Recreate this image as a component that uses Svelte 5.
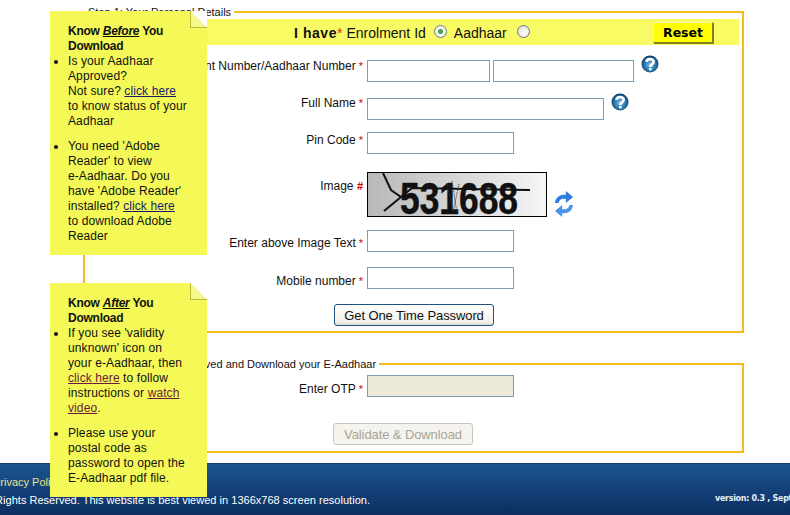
<script>
  const rows = [
    { label: 'Resident Number/Aadhaar Number', mark: '*', fields: ['w123', 'w141'], help: true, cls: 'r1' },
    { label: 'Full Name', mark: '*', fields: ['w237'], help: true, cls: 'r2' },
    { label: 'Pin Code', mark: '*', fields: ['w147'], cls: 'r3' }
  ];
</script>

<div class="page">
  <main class="content">
    <fieldset class="box first">
      <legend>Step 1: Your Personal Details</legend>
      <div class="have">
        <span class="have-label"><b>I have</b><i>*</i></span>
        <span>Enrolment Id</span>
        <input class="radio" type="radio" name="kind" checked />
        <span class="aadhaar">Aadhaar</span>
        <input class="radio" type="radio" name="kind" />
        <button class="reset">Reset</button>
      </div>

      {#each rows as row}
        <div class="row {row.cls}">
          <label class="lab">{row.label}<i>{row.mark}</i></label>
          <div class="vals">
            {#each row.fields as f}<input class="text {f}" />{/each}
            {#if row.help}
              <svg class="help" viewBox="0 0 18 18" width="18" height="18">
                <defs>
                  <radialGradient id="hg{row.cls}" cx=".5" cy=".55" r=".55">
                    <stop offset="0" stop-color="#7fc0e4" />
                    <stop offset=".6" stop-color="#2a78ad" />
                    <stop offset="1" stop-color="#0b3a66" />
                  </radialGradient>
                </defs>
                <circle cx="9" cy="9" r="8.500" fill="url(#hg{row.cls})" />
                <path d="M5.500 6.800C5.800 3.400 12.700 3.200 12.700 6.800 12.700 9.200 9.300 9.300 9.300 12" fill="none" stroke="#fff" stroke-width="2.700" />
                <rect x="8" y="13" width="2.600" height="2.400" fill="#fff" />
              </svg>
            {/if}
          </div>
        </div>
      {/each}

      <div class="row r4">
        <label class="lab lab-top">Image <i class="hash">#</i></label>
        <div class="vals img-vals">
          <svg class="captcha" viewBox="0 0 180 45" width="180" height="45">
            <defs>
              <linearGradient id="cg" x1="0" x2="1" y1="0" y2="0">
                <stop offset="0" stop-color="#b8b8b8" />
                <stop offset="1" stop-color="#f6f6f6" />
              </linearGradient>
            </defs>
            <rect x=".5" y=".5" width="179" height="44" fill="url(#cg)" stroke="#000" />
            <text x="33" y="42" class="ctext" textLength="118" lengthAdjust="spacingAndGlyphs">531688</text>
            <path d="M16 1l8 17 10 7M17 39l28-23 118 2" fill="none" stroke="#111" stroke-width="2" />
            <path d="M80 11l6 29M85 9l5 32M92 12l-6 28" fill="none" stroke="#333" stroke-width="1" stroke-dasharray="1 1" />
          </svg>
          <svg class="refresh" viewBox="0 0 22 26" width="20" height="26" preserveAspectRatio="none">
            <path d="M1 12C2 6 7 3 13 4V0l8 6-8 6V8C9 7 6 8 5 12z" fill="#2f7de0" />
            <path d="M21 14c-1 6-6 9-12 8v4l-8-6 8-6v4c4 1 7 0 8-4z" fill="#4a94ea" />
          </svg>
        </div>
      </div>

      <div class="row r5">
        <label class="lab">Enter above Image Text<i>*</i></label>
        <div class="vals"><input class="text w147" /></div>
      </div>
      <div class="row r6">
        <label class="lab">Mobile number<i>*</i></label>
        <div class="vals"><input class="text w147" /></div>
      </div>
      <div class="row r7">
        <div class="lab"></div>
        <button class="otp">Get One Time Password</button>
      </div>
    </fieldset>

    <fieldset class="box second">
      <legend class="legend2">Step 2: Enter OTP Received and Download your E-Aadhaar</legend>
      <div class="row r8">
        <label class="lab">Enter OTP<i>*</i></label>
        <div class="vals"><input class="text w147 off" disabled /></div>
      </div>
      <div class="row r9">
        <div class="lab"></div>
        <button class="validate" disabled>Validate &amp; Download</button>
      </div>
    </fieldset>
  </main>

  <footer class="foot">
    <div class="foot-left">
      <div class="links"><a href="#p">Privacy Policy</a></div>
      <div class="copy">Copyright © 2013 UIDAI. All Rights Reserved. This website is best viewed in 1366x768 screen resolution.</div>
    </div>
    <div class="version">version: 0.3 , September 2013</div>
  </footer>

  <aside class="note n1">
    <div class="fold"></div>
    <h4>Know <u><em>Before</em></u> You Download</h4>
    <ul>
      <li>Is your Aadhaar Approved?<br />Not sure? <a href="#a">click here</a><br />to know status of your Aadhaar</li>
      <li>You need 'Adobe Reader' to view <span class="nb">e-Aadhaar.</span> Do you have 'Adobe Reader' installed? <a href="#b">click here</a><br />to download Adobe Reader</li>
    </ul>
  </aside>

  <aside class="note n2">
    <div class="fold"></div>
    <h4>Know <u><em>After</em></u> You Download</h4>
    <ul>
      <li>If you see 'validity unknown' icon on<br />your e-Aadhaar, then<br /><a class="vis" href="#c">click here</a> to follow instructions or <a class="vis" href="#d">watch video</a>.</li>
      <li>Please use your postal code as password to open the <span class="nb">E-Aadhaar</span> pdf file.</li>
    </ul>
  </aside>
</div>

<style>
  :global(body) { margin: 0; background: #fff; }
  .page {
    position: relative;
    width: 790px;
    height: 515px;
    overflow: hidden;
    font-family: "Liberation Sans", Arial, sans-serif;
    font-size: 12px;
    color: #111;
    display: flex;
    flex-direction: column;
  }
  .content { flex: 1; padding: 5px 46px 0 83px; }
  .box {
    margin: 0;
    padding: 0 2px 0 2px;
    border: 2px solid #f2bb1e;
    min-width: 0;
  }
  .first { height: 328px; box-sizing: border-box; padding-bottom: 0; }
  .second { height: 96px; box-sizing: border-box; margin-top: 24px; }
  legend { padding: 0 3px 0 3px; margin-left: -2px; font-size: 11px; line-height: 14px; height: 14px; }
  .legend2 { margin-left: -6px; }
  .have {
    height: 26px;
    margin-right: 1px;
    background: #f9fb64;
    display: flex;
    align-items: center;
    padding-left: 207px;
    font-size: 14px;
    position: relative;
  }
  .have > span { position: relative; top: 1px; }
  .have-label { margin-right: 4px; }
  .aadhaar { margin-right: 2px; }
  .have b { letter-spacing: .55px; }
  .have-label i { color: #d22; font-style: normal; }
  .radio {
    appearance: none;
    width: 13px;
    height: 13px;
    margin: 0 7px 2px 8px;
    border-radius: 50%;
    border: 1px solid #6b7a84;
    background: radial-gradient(circle at 60% 60%, #fff, #d8d8d0);
    box-sizing: border-box;
  }
  .radio:checked { background: radial-gradient(circle, #3fa34d 0 2px, #f4f4ee 3px); }
  .reset {
    position: absolute;
    left: 566px;
    top: 3px;
    width: 60px;
    height: 21px;
    padding: 0;
    font: bold 12.500px "DejaVu Sans", sans-serif;
    color: #000;
    background: #ffff00;
    border: 1px solid;
    border-color: #f4f4b0 #80801c #80801c #f4f4b0;
    box-shadow: 1px 1px 0 #80801c;
  }
  .row { display: flex; align-items: flex-start; }
  .lab {
    width: 276px;
    flex: none;
    box-sizing: border-box;
    text-align: right;
    white-space: nowrap;
    line-height: 14px;
    padding-top: 2px;
  }
  .lab i { color: #c00; font-style: normal; margin-left: 3px; font-size: 11px; }
  .lab .hash { margin-left: 0; font-weight: bold; }
  .vals { display: flex; align-items: flex-start; gap: 3px; margin-left: 4px; }
  .text {
    box-sizing: border-box;
    height: 22px;
    padding: 0;
    border: 1px solid #7f9db0;
    background: #fff;
  }
  .off { background: #ece9d8; }
  .w123 { width: 123px; }
  .w141 { width: 141px; }
  .w237 { width: 237px; }
  .w147 { width: 147px; }
  .help { margin: -5px 0 0 4px; }
  .r1 { margin-top: 15px; }
  .r1 .lab { padding-top: 0; margin-top: -1px; }
  .r2 { margin-top: 16px; }
  .r2 .lab { padding-top: 0; margin-top: -2px; }
  .r3 { margin-top: 12px; }
  .r3 .lab { padding-top: 1px; }
  .r4 { margin-top: 18px; }
  .img-vals { gap: 7px; align-items: flex-end; }
  .captcha { display: block; }
  .ctext { font: bold 44px "Liberation Sans", sans-serif; fill: #111; stroke: #111; stroke-width: .5; }
  .lab-top { padding-top: 7px; }
  .r5 { margin-top: 13px; }
  .r5 .lab { padding-top: 6px; }
  .r6 { margin-top: 15px; }
  .r6 .lab { padding-top: 7px; }
  .r7 { margin-top: 15px; }
  .r8 { margin-top: 4px; }
  .r9 { margin-top: 26px; }
  .r8 .lab { padding-top: 7px; }
  .otp, .validate {
    box-sizing: border-box;
    height: 22px;
    padding: 0;
    font: 13px "Liberation Sans", sans-serif;
    letter-spacing: -.1px;
    border-radius: 3px;
  }
  .otp {
    margin-left: -29px;
    width: 160px;
    color: #111;
    background: linear-gradient(#fff, #f2f1ea 85%, #dcdacd);
    border: 1px solid #1c5180;
  }
  .validate {
    margin-left: -30px;
    width: 140px;
    color: #a8a697;
    background: #f4f3ee;
    border: 1px solid #c9c7ba;
  }
  .foot {
    height: 52px;
    flex: none;
    box-sizing: border-box;
    position: relative;
    border-top: 1px solid #123e6c;
    background: linear-gradient(#1b5590, #0c2e60);
    overflow: hidden;
    display: flex;
    color: #fff;
  }
  .foot-left {
    width: 370px;
    flex: none;
    display: flex;
    flex-direction: column;
    align-items: flex-end;
    overflow: hidden;
    padding-top: 11px;
    box-sizing: border-box;
  }
  .links { align-self: flex-start; margin-left: -7px; line-height: 14px; font-size: 11px; }
  .links a { color: #eee28c; text-decoration: none; }
  .copy { white-space: nowrap; line-height: 14px; margin-top: 4px; font-size: 11px; letter-spacing: .02px; }
  .version {
    margin: 30px 0 0 345px;
    white-space: nowrap;
    font: bold 8px "DejaVu Sans", sans-serif;
    letter-spacing: -.3px;
    line-height: 10px;
    color: #e8eef5;
  }
  .note {
    position: absolute;
    left: 50px;
    width: 157px;
    box-sizing: border-box;
    background: #f4f958;
    padding: 13px 17px 0 18px;
    line-height: 15px;
    letter-spacing: .1px;
    color: #111;
  }
  .n1 { top: 11px; height: 244px; }
  .n2 { top: 283px; height: 214px; }
  .fold {
    position: absolute;
    right: 0;
    top: 0;
    width: 16px;
    height: 16px;
    border-left: 1px solid #b9bb40;
    border-bottom: 1px solid #b9bb40;
    background: linear-gradient(to top right, #f6f88c 50%, #fff 50%);
  }
  h4 { margin: 0; font-size: 12px; line-height: 15px; letter-spacing: -.25px; }
  ul { margin: 0; padding: 0; list-style: disc; }
  li { margin: 0 0 10px 0; }
  .nb { white-space: nowrap; }
  a { color: #1a1a6e; }
  a.vis { color: #6e1a3a; }
</style>
